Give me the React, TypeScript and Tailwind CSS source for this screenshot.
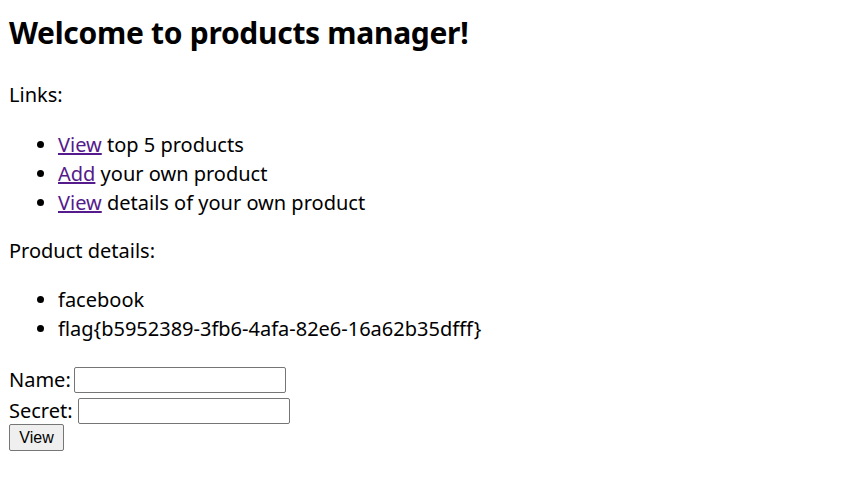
export default function App() {
  const sans = "font-['Noto_Sans',sans-serif] [font-stretch:semi-condensed]";
  return (
    <div className={`py-2 pl-[9px] ${sans} text-[20px] leading-[29px] text-black`}>
      <h1 className="mt-[3px] text-[30px] leading-[44px] font-bold tracking-[-0.3px]">Welcome to products manager!</h1>

      <p className="mt-[25px]">Links:</p>
      <ul className="mt-[21px] list-disc pl-[49px]">
        <li>
          <a href="#" className="text-[#551a8b] underline">View</a> top 5 products
        </li>
        <li>
          <a href="#" className="text-[#551a8b] underline">Add</a> your own product
        </li>
        <li>
          <a href="#" className="text-[#551a8b] underline">View</a> details of your own product
        </li>
      </ul>

      <p className="mt-[19px]">Product details:</p>
      <ul className="mt-[20px] list-disc pl-[49px]">
        <li>facebook</li>
        <li>flag{"{"}b5952389-3fb6-4afa-82e6-16a62b35dfff{"}"}</li>
      </ul>

      <form className="mt-[19px]" onSubmit={(e) => e.preventDefault()}>
        <div className="flex h-[31px] items-end">
          <span className="leading-[26px]">Name:</span>
          <input type="text" className="ml-[3px] h-[26px] w-[212px] rounded-[2px] border border-[#767676] bg-white" />
        </div>
        <div className="flex h-[31px] items-end">
          <span className="leading-[26px]">Secret:</span>
          <input type="password" className="ml-[5px] h-[26px] w-[212px] rounded-[2px] border border-[#767676] bg-white" />
        </div>
        <button
          type="submit"
          className="block h-[27px] w-[55px] rounded-[2px] border border-[#767676] bg-[#efefef] font-['Liberation_Sans',Arial,sans-serif] text-[16px] leading-none [font-stretch:normal]"
        >
          View
        </button>
      </form>
    </div>
  );
}
